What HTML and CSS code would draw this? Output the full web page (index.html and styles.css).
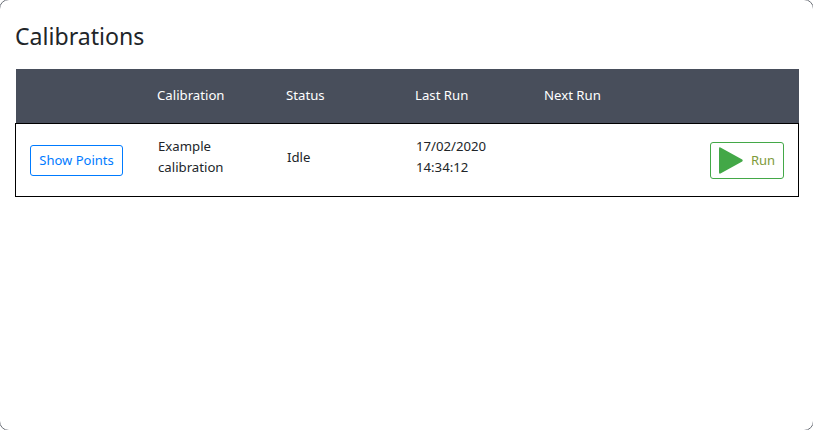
FILE: index.html
```html
<!DOCTYPE html>
<html lang="en">
<head>
    <meta charset="UTF-8">
    <title>Calibrations</title>
    <link rel="stylesheet" href="styles.css">
</head>
<body>

<div class="modal">
    <h2>Calibrations</h2>
    <table class="calibrations">
        <thead>
            <tr>
                <th class="col-action"></th>
                <th class="col-data">Calibration</th>
                <th class="col-data">Status</th>
                <th class="col-data">Last Run</th>
                <th class="col-data">Next Run</th>
                <th class="col-run"></th>
            </tr>
        </thead>
        <tbody>
            <tr>
                <td class="cell-action"><button class="points-btn">Show Points</button></td>
                <td>Example<br>calibration</td>
                <td class="cell-single">Idle</td>
                <td>17/02/2020<br>14:34:12</td>
                <td></td>
                <td class="cell-run">
                    <button class="run-btn">
                        <svg class="run-icon" viewBox="0.5 1.3 24.8 27.4" width="24" height="27">
                            <path d="M2 1.5 L24.5 14 Q25.5 15 24.5 16 L2 28.5 Q0.5 29 0.5 27.5 L0.5 2.5 Q0.5 1 2 1.5 Z" fill="#43a847"/>
                        </svg>
                        <span>Run</span>
                    </button>
                </td>
            </tr>
        </tbody>
    </table>
</div>

</body>
</html>
```

FILE: styles.css
```css
* {
    margin: 0;
    padding: 0;
    box-sizing: border-box;
    font-family: 'Noto Sans', 'Open Sans', sans-serif;
}

html, body {
    height: 100%;
    overflow: hidden;
    background: #fff;
}

body {
    color: #212529;
    font-size: 13.2px;
    line-height: 21px;
}

.modal {
    margin: -1px;
    height: 432px;
    padding: 18px 15px 0 15px;
    border: 1px solid #6c7078;
    border-radius: 10px;
}

h2 {
    font-size: 23.1px;
    font-weight: 400;
    line-height: 36px;
    margin-bottom: 15px;
}

.calibrations {
    width: 784px;
    table-layout: fixed;
    border-collapse: collapse;
}

.calibrations th {
    height: 54px;
    padding: 0 11.5px;
    background: #484e5b;
    color: #fff;
    font-weight: 400;
    text-align: left;
}

.col-action {
    width: 130px;
}

.col-data {
    width: 129px;
}

.calibrations tbody tr {
    border: 1px solid #000;
}

.calibrations td {
    height: 73px;
    padding: 0 0 6px 12.5px;
    vertical-align: middle;
}

.calibrations td.cell-single {
    padding-bottom: 4px;
}

.calibrations td.cell-action {
    padding: 2px 0 0 14px;
}

.calibrations td.cell-run {
    padding: 2px 14px 0 0;
    text-align: right;
}

button {
    background: #fff;
    border-radius: 3px;
    font-size: 13px;
    line-height: 21px;
}

.points-btn {
    width: 93px;
    height: 31px;
    border: 1px solid #007bff;
    color: #007bff;
    vertical-align: middle;
}

.run-btn {
    display: inline-flex;
    align-items: center;
    width: 74px;
    height: 37px;
    padding-left: 8px;
    gap: 8px;
    border: 1px solid #43a847;
    color: #7d9a3a;
    vertical-align: middle;
}

.run-icon {
    flex: none;
}
```
